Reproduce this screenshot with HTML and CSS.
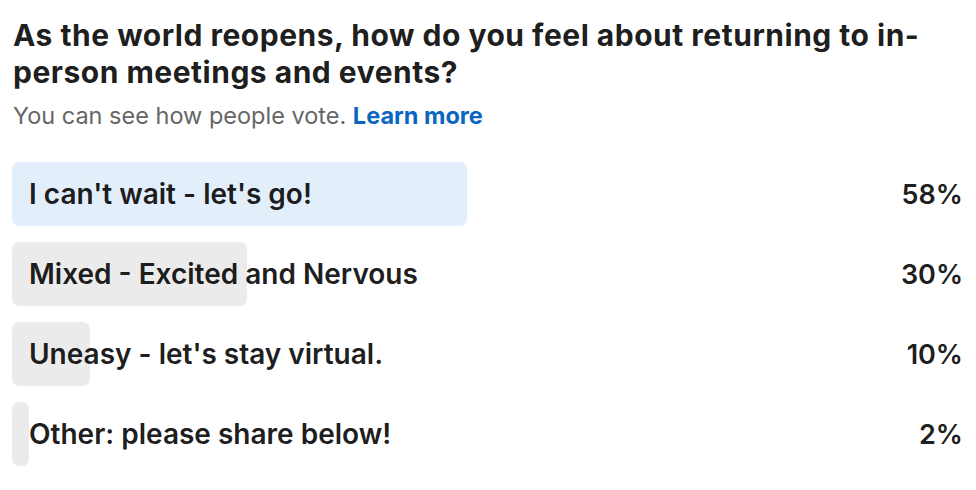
FILE: index.html
```html
<!DOCTYPE html>
<html>
<head>
  <meta charset="UTF-8">
  <title>Poll</title>
  <link rel="stylesheet" href="styles.css">
</head>
<body>
  <div class="poll">
    <h2 class="question">As the world reopens, how do you feel about returning to in-person meetings and events?</h2>
    <p class="note">You can see how people vote. <a href="#">Learn more</a></p>

    <div class="options">
      <div class="option">
        <div class="track">
          <div class="bar top" style="width: 58%"></div>
          <span class="label">I can't wait - let's go!</span>
        </div>
        <span class="pct">58%</span>
      </div>
      <div class="option">
        <div class="track">
          <div class="bar" style="width: 30%"></div>
          <span class="label">Mixed - Excited and Nervous</span>
        </div>
        <span class="pct">30%</span>
      </div>
      <div class="option">
        <div class="track">
          <div class="bar" style="width: 10%"></div>
          <span class="label">Uneasy - let's stay virtual.</span>
        </div>
        <span class="pct">10%</span>
      </div>
      <div class="option">
        <div class="track">
          <div class="bar" style="width: 2%"></div>
          <span class="label">Other: please share below!</span>
        </div>
        <span class="pct">2%</span>
      </div>
    </div>
  </div>
</body>
</html>
```
FILE: styles.css
```css
body {
  font-family: Inter, "Noto Sans", sans-serif;
  margin: 0;
  background: #fff;
  color: rgba(0, 0, 0, 0.9);
}

.poll {
  padding: 17px 13px 0 12px;
}

.question {
  font-size: 30px;
  font-weight: 700;
  line-height: 37px;
  letter-spacing: 0.5px;
  margin: 0 0 0 1px;
  max-width: 945px;
}

.note {
  font-size: 23.5px;
  line-height: 30px;
  color: #666;
  margin: 10px 0 0 1px;
}

.note a {
  color: #0a66c2;
  font-weight: 700;
  text-decoration: none;
}

.options {
  display: flex;
  flex-direction: column;
  gap: 16px;
  margin-top: 31px;
}

.option {
  display: flex;
  align-items: center;
}

.track {
  position: relative;
  flex: 0 0 784px;
  height: 64px;
  display: flex;
  align-items: center;
}

.bar {
  position: absolute;
  left: 0;
  top: 0;
  bottom: 0;
  min-width: 17px;
  background: #ebebeb;
  border-radius: 7px;
}

.bar.top {
  background: #e3eefb;
}

.label {
  position: relative;
  padding-left: 17px;
  font-size: 28px;
  font-weight: 600;
}

.pct {
  flex: 1;
  text-align: right;
  font-size: 27px;
  font-weight: 600;
}
```
